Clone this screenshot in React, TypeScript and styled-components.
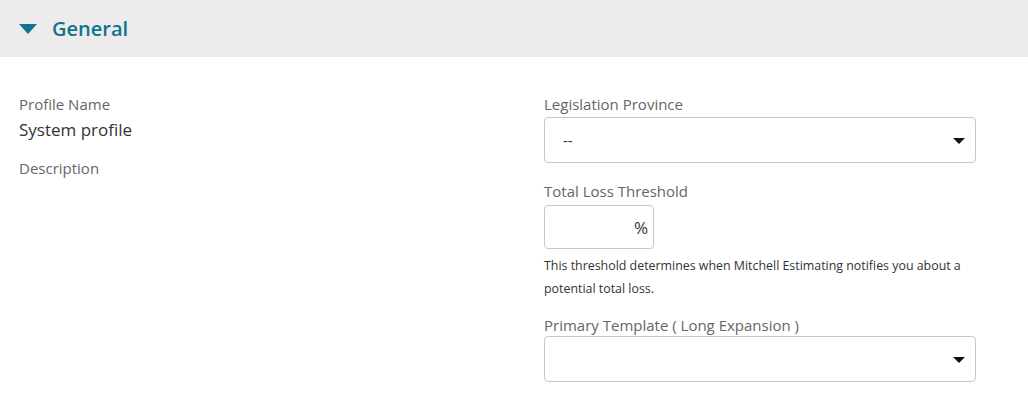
import React from "react";
import styled, { createGlobalStyle } from "styled-components";

const Global = createGlobalStyle`
  html, body { margin: 0; padding: 0; background: #fff; }
  body { font-family: "Open Sans", "Liberation Sans", sans-serif; }
`;

const Page = styled.div`
  width: 1028px;
  height: 413px;
  overflow: hidden;
  background: #fff;
`;

const Header = styled.div`
  height: 57px;
  background: #edebec;
  display: flex;
  align-items: center;
  padding-left: 19px;
  gap: 15px;
`;

const Caret = styled.span`
  width: 0;
  height: 0;
  border-left: 9.5px solid transparent;
  border-right: 9.5px solid transparent;
  border-top: 10px solid #0f7390;
  margin-top: 1px;
`;

const Title = styled.h2`
  margin: 0;
  font-size: 20px;
  font-weight: 600;
  color: #0f7390;
`;

const Body = styled.div`
  display: grid;
  grid-template-columns: 525px 432px;
  padding: 38px 0 0 19px;
`;

const Col = styled.div`
  display: flex;
  flex-direction: column;
`;

const Label = styled.div<{ $mt?: number }>`
  font-size: 15px;
  line-height: 18px;
  color: #666;
  margin-top: ${(p) => p.$mt ?? 0}px;
`;

const Value = styled.div`
  font-size: 17px;
  line-height: 22px;
  color: #333;
  margin-top: 6px;
`;

const Select = styled.div<{ $mt?: number }>`
  margin-top: ${(p) => p.$mt ?? 4}px;
  height: 46px;
  box-sizing: border-box;
  border: 1px solid #c8c8c8;
  border-radius: 4px;
  display: flex;
  align-items: center;
  justify-content: space-between;
  padding: 0 10px 0 18px;
  font-size: 15px;
  color: #333;
`;

const Arrow = styled.span`
  width: 0;
  height: 0;
  border-left: 6px solid transparent;
  border-right: 6px solid transparent;
  border-top: 6px solid #111;
  margin-top: 1px;
`;

const PercentBox = styled.div`
  margin-top: 5px;
  width: 110px;
  height: 44px;
  box-sizing: border-box;
  border: 1px solid #c8c8c8;
  border-radius: 4px;
  display: flex;
  align-items: center;
  justify-content: flex-end;
  padding-right: 5px;
  font-size: 17px;
  color: #333;
`;

const Help = styled.p`
  margin: 5px 0 0;
  font-size: 12.4px;
  line-height: 23px;
  color: #333;
  width: 432px;
`;

export default function App() {
  return (
    <Page>
      <Global />
      <Header>
        <Caret />
        <Title>General</Title>
      </Header>
      <Body>
        <Col>
          <Label>Profile Name</Label>
          <Value>System profile</Value>
          <Label $mt={18}>Description</Label>
        </Col>
        <Col>
          <Label>Legislation Province</Label>
          <Select>
            <span>--</span>
            <Arrow />
          </Select>
          <Label $mt={19}>Total Loss Threshold</Label>
          <PercentBox>%</PercentBox>
          <Help>
            This threshold determines when Mitchell Estimating notifies you about a
            potential total loss.
          </Help>
          <Label $mt={16}>Primary Template ( Long Expansion )</Label>
          <Select $mt={2}>
            <span></span>
            <Arrow />
          </Select>
        </Col>
      </Body>
    </Page>
  );
}
